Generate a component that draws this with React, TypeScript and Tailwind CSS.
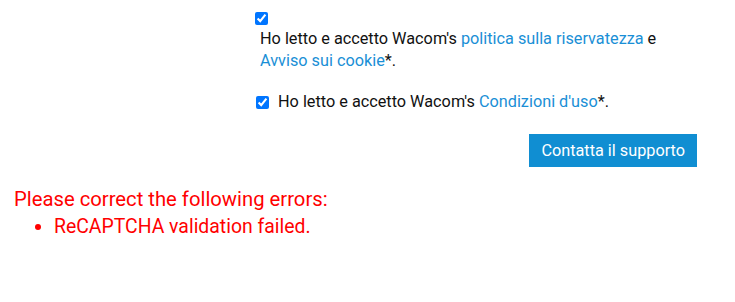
import React from "react";

export default function App() {
  return (
    <div className="w-[735px] h-[302px] bg-white text-[#111]" style={{ fontFamily: "Roboto, 'Liberation Sans', sans-serif" }}>
      <div className="ml-[251px] w-[446px] pt-[9px]">
        <div>
          <input type="checkbox" defaultChecked className="block m-[3px_3px_3px_4px] w-[13px] h-[13px]" />
          <p className="pl-[9px] text-[16.25px] leading-[22px]">
            Ho letto e accetto Wacom's <a className="text-[#1a8fd6]">politica sulla riservatezza</a> e{" "}
            <a className="text-[#1a8fd6]">Avviso sui cookie</a>*.
          </p>
        </div>
        <div className="mt-[19px] flex items-center">
          <input type="checkbox" defaultChecked className="block m-[3px_3px_3px_5px] w-[13px] h-[13px]" />
          <span className="pl-[6px] text-[16.25px] leading-[22px]">
            Ho letto e accetto Wacom's <a className="text-[#1a8fd6]">Condizioni d'uso</a>*.
          </span>
        </div>
        <div className="mt-[21px] flex justify-end">
          <button className="h-[33px] px-[12px] bg-[#108ed2] text-white text-[16.25px] leading-[33px]">
            Contatta il supporto
          </button>
        </div>
      </div>
      <div className="mt-[19px] pl-[14px] leading-[27px] text-[#ff0000]">
        <p className="text-[20.25px]">Please correct the following errors:</p>
        <ul className="list-disc pl-[40px] text-[19.4px]">
          <li>ReCAPTCHA validation failed.</li>
        </ul>
      </div>
    </div>
  );
}
